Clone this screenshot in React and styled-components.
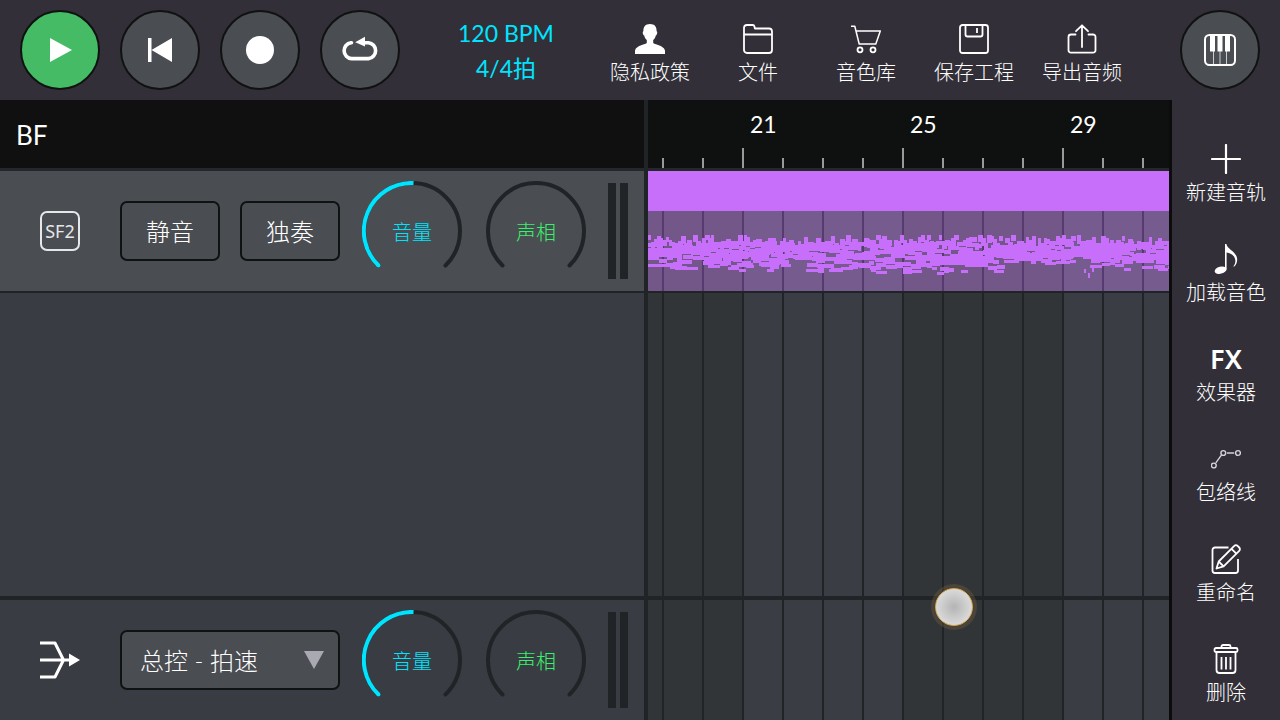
import React, { useState } from 'react'
import styled, { createGlobalStyle } from 'styled-components';

const GlobalStyle = createGlobalStyle`
  * {
    box-sizing: border-box;
  }
  body {
    margin: 0;
    background: #322f38;
    color: white;
    font-family: Lato, "Noto Sans CJK SC", sans-serif;
    font-weight: 300;
  }
  button, select, input {
    font: inherit;
    color: inherit;
    margin: 0;
  }
  svg {
    display: block;
  }
`;

/* ---------- icons ---------- */

const Icon = ({ size = 30, children }) => (
  <svg width={size} height={size} viewBox={`0 0 ${size} ${size}`} fill="none" stroke="white" strokeWidth="1.8" strokeLinejoin="round" aria-hidden="true">
    {children}
  </svg>
)

const PlayIcon = () => (
  <Icon size={40}><path d="M10 8v24l22-12z" fill="white" stroke="none" /></Icon>
)

const RewindIcon = () => (
  <Icon size={40}><path d="M8 8h3.500v24H8zM32 8v24L11.500 20z" fill="white" stroke="none" /></Icon>
)

const RecordIcon = () => (
  <Icon size={40}><circle cx="20" cy="20" r="14" fill="white" stroke="none" /></Icon>
)

const LoopIcon = () => (
  <Icon size={40}>
    <path d="M11.500 12.700h-.5A8 8 0 0 0 11.500 28.600h17A8 8 0 0 0 28.500 12.700h-5" strokeWidth="3.600" strokeLinecap="round" />
    <path d="M15.200 12.300l9.800-5.500v9.600z" fill="white" stroke="none" />
  </Icon>
)

const PianoIcon = () => (
  <Icon size={40}>
    <path d="M13.500 20v15M20 20v15M26.500 20v15" stroke="#c9cbd0" strokeWidth="1" />
    <path d="M10 5h5v16.500h-5zM17.500 5h5v16.500h-5zM25 5h5v16.500h-5z" fill="white" stroke="none" />
    <rect x="5" y="5" width="30" height="30" rx="4.500" strokeWidth="2" />
  </Icon>
)

const UserIcon = () => (
  <Icon>
    <path
      d="M15 0c-4.600 0-6.800 2.800-6.600 7.300-1.200.4-.6 3.700.8 4.200.5 2.200 1.400 3.400 2.600 4.500v2.800c-.6 2.100-10.300 2-11.800 7.700V30h30v-3.500c-1.500-5.700-11.200-5.600-11.800-7.700V16c1.200-1.100 2.100-2.300 2.600-4.500 1.400-.5 2-3.800.8-4.200C21.800 2.800 19.600 0 15 0z"
      fill="white"
      stroke="none"
    />
  </Icon>
)

const FolderIcon = () => (
  <Icon>
    <path d="M1 4a3 3 0 0 1 3-3h5.500a2 2 0 0 1 2 1.600l.4 1.900H26a3 3 0 0 1 3 3V26a3 3 0 0 1-3 3H4a3 3 0 0 1-3-3zM1 10.500h28" />
  </Icon>
)

const CartIcon = () => (
  <Icon>
    <path d="M0 2.200h3.800L8.200 20h16.600L29.300 7H5" strokeWidth="1.500" />
    <circle cx="9" cy="25.800" r="2.500" />
    <circle cx="22" cy="25.800" r="2.500" />
  </Icon>
)

const SaveIcon = () => (
  <Icon>
    <rect x="1" y="1" width="28" height="28" rx="2.500" />
    <path d="M6.500 1v9.500a2 2 0 0 0 2 2h13a2 2 0 0 0 2-2V1M18 4v5" />
  </Icon>
)

const ExportIcon = () => (
  <Icon>
    <path d="M8.500 10.500H4a2.500 2.500 0 0 0-2.500 2.500v13A2.500 2.500 0 0 0 4 28.700h22a2.500 2.500 0 0 0 2.500-2.700V13a2.500 2.500 0 0 0-2.500-2.500h-4.500M15 23V1.500M9 7.200l6-5.900 6 5.900" strokeLinecap="round" />
  </Icon>
)

const PlusIcon = () => (
  <Icon><path d="M1 15h28M15 1v28" strokeWidth="2.200" strokeLinecap="round" /></Icon>
)

const NoteIcon = () => (
  <Icon>
    <g fill="white" stroke="none">
      <ellipse cx="9.600" cy="26.200" rx="6" ry="3.500" transform="rotate(-14 9.600 26.200)" />
      <path d="M14 0h1.400c.5 5 10.800 8 10.800 15.500 0 3-1 5.200-3.200 7.200l-.6-.4c1.600-2 2.200-4 1.900-6.300-.5-4-4-7-8.700-7.600V25.500H14z" />
    </g>
  </Icon>
)

const EnvelopeIcon = () => (
  <Icon>
    <g strokeWidth="1.400" stroke="#d4d3d6">
      <circle cx="2.800" cy="21.500" r="2.400" />
      <circle cx="12.300" cy="9" r="2.400" />
      <circle cx="27" cy="9" r="2.400" />
      <path d="M4.800 18.800l5.600-7.600M16 9h7.200" />
    </g>
  </Icon>
)

const RenameIcon = () => (
  <Icon>
    <path d="M17.500 3.500H4A2.500 2.500 0 0 0 1.500 6v20.500A2.500 2.500 0 0 0 4 29h20.500a2.500 2.500 0 0 0 2.500-2.500V15" />
    <path d="M5.500 24.500l2.200-7L23.300 1.900a2.300 2.300 0 0 1 3.300 0l1.600 1.600a2.300 2.300 0 0 1 0 3.300L12.600 22.300zM20.500 4.800l4.900 4.900M7.700 17.500l4.900 4.800" />
  </Icon>
)

const TrashIcon = () => (
  <Icon>
    <rect x="3.500" y="4" width="23" height="4" rx="1.500" />
    <path d="M10.500 4V2.500A1.500 1.500 0 0 1 12 1h6a1.500 1.500 0 0 1 1.500 1.500V4M5.500 8v18a3 3 0 0 0 3 3h13a3 3 0 0 0 3-3V8M10.500 13v12.500M15 13v12.500M19.500 13v12.500" />
  </Icon>
)

const MergeIcon = () => (
  <Icon size={40}>
    <path d="M0 3h15l8.500 17L15 37H0M0 20h30" strokeWidth="3" />
    <path d="M29 13.500L40 20l-11 6.500z" fill="white" stroke="none" />
  </Icon>
)

/* ---------- page ---------- */

const App = () => {
  return (
    <Page>
      <GlobalStyle />
      <Header>
        <Transport>
          <RoundButton $active aria-label="播放"><PlayIcon /></RoundButton>
          <RoundButton aria-label="回到开头"><RewindIcon /></RoundButton>
          <RoundButton aria-label="录音"><RecordIcon /></RoundButton>
          <RoundButton aria-label="循环"><LoopIcon /></RoundButton>
        </Transport>
        <Tempo>
          <span>120 BPM</span>
          <span>4/4拍</span>
        </Tempo>
        <Tools>
          {tools.map((tool) => <ToolItem key={tool.label} {...tool} />)}
        </Tools>
        <RoundButton aria-label="键盘"><PianoIcon /></RoundButton>
      </Header>
      <Main>
        <TrackPanel>
          <ProjectName>BF</ProjectName>
          <TrackRow>
            <Badge>SF2</Badge>
            <Controls>
              <TrackButton>静音</TrackButton>
              <TrackButton>独奏</TrackButton>
            </Controls>
            <Mixer />
          </TrackRow>
          <Filler />
          <TrackRow $master>
            <MergeIcon />
            <Controls>
              <SelectBox>
                <Select aria-label="总控" defaultValue="tempo">
                  <option value="tempo">总控 - 拍速</option>
                </Select>
                <Arrow width="20" height="18" viewBox="0 0 20 18" aria-hidden="true">
                  <path d="M0 0h20L10 18z" fill="#a9a9b2" />
                </Arrow>
              </SelectBox>
            </Controls>
            <Mixer />
          </TrackRow>
        </TrackPanel>
        <Arranger>
          <Ruler>
            {[21, 25, 29].map((bar) => <Measure key={bar}>{bar}</Measure>)}
          </Ruler>
          <Lane>
            <Clip>
              <ClipBody>
                <Notes />
              </ClipBody>
            </Clip>
          </Lane>
          <Filler />
          <MasterLane />
          <Pointer />
        </Arranger>
        <Sidebar>
          {actions.map((action) => <ToolItem key={action.label} {...action} />)}
        </Sidebar>
      </Main>
    </Page>
  )
}

export default App

const ToolItem = ({ icon, label }) => (
  <ToolButton>
    {icon}
    <span>{label}</span>
  </ToolButton>
)

/* ---------- mixer controls ---------- */

const Knob = ({ label, color, filled }) => {
  const [value, setValue] = useState(50)

  return (
    <KnobBox $color={color}>
      <svg width="100" height="100" viewBox="0 0 100 100" fill="none" strokeWidth="4" aria-hidden="true">
        <path d="M16.500 84.500A48 48 0 1 1 83.500 84.500" stroke="#212427" strokeLinecap="round" />
        {filled && (
          <>
            <path d="M16.500 84.500A48 48 0 0 1 51.500 2" stroke="#00e5ff" />
            <circle cx="16.500" cy="84.500" r="2" fill="#00e5ff" />
          </>
        )}
      </svg>
      <KnobLabel>{label}</KnobLabel>
      <KnobInput type="range" value={value} onChange={(e) => setValue(Number(e.target.value))} />
    </KnobBox>
  )
}

const Mixer = () => (
  <>
    <Knobs>
      <Knob label="音量" color="#00e5ff" filled />
      <Knob label="声相" color="#37f26a" />
    </Knobs>
    <Meters>
      <Meter />
      <Meter />
    </Meters>
  </>
)

/* ---------- clip notes ---------- */

// lowest note of the clip at a given x
const lowEdge = [
  [0, 31], [24, 34], [36, 31], [56, 29], [80, 33], [97, 29], [110, 34], [130, 31], [150, 33],
  [162, 36], [185, 34], [205, 31], [217, 36], [232, 34], [250, 36], [275, 33], [288, 36],
  [312, 34], [350, 25], [380, 27], [442, 29], [468, 32], [485, 30], [500, 34], [514, 31],
]

const buildNotes = () => {
  const notes = []
  let seed = 11
  const random = () => {
    seed = (seed * 16807) % 2147483647
    return seed / 2147483647
  }
  const lowAt = (x) => lowEdge.filter(([start]) => start <= x % 521).pop()[1]

  // short melody notes along the top
  for (let x = 0; x < 1600; x += 3) {
    const y = Math.floor(random() * 9)
    if (random() < 0.82) {
      notes.push({ x, y, width: 3 + Math.floor(random() * 3), height: 5 + Math.floor(random() * 5) })
    }
  }
  // the full middle
  for (let row = 0; row < 5; row++) {
    let x = 0
    while (x < 1600) {
      const width = 4 + Math.floor(random() * 8)
      const drift = Math.round(Math.sin(x / 17 + row) * 2)
      if (random() < 0.8) {
        notes.push({ x, y: 8 + row * 3 + drift, width, height: 4 })
      }
      x += width
    }
  }
  // bass lines, stepping with the low edge
  const lines = [[0, 0.75], [4, 0.72], [8, 0.8], [11, 0.75], [14, 0.6]]
  lines.forEach(([up, amount]) => {
    let x = 0
    while (x < 1600) {
      const width = 5 + Math.floor(random() * 8)
      const step = Math.floor(random() * 4) - 2
      if (random() < amount) {
        notes.push({ x, y: lowAt(x) - up + step, width, height: up ? 4 : 3 })
      }
      x += width
    }
  })
  return notes
}

const clipNotes = buildNotes()

const Notes = () => (
  <svg width="100%" height="46" fill="#c76ffa" stroke="none" shapeRendering="crispEdges" aria-hidden="true">
    {clipNotes.map((note, i) => <rect key={i} {...note} />)}
    <path d="M436 34h2v4h-2zM440 38h2v5h-2zM444 33h2v4h-2z" />
  </svg>
)

/* ---------- styles ---------- */

const Page = styled.div`
  min-height: 100vh;
  display: flex;
  flex-direction: column;
`;
const Header = styled.header`
  display: flex;
  align-items: center;
  height: 100px;
  padding: 0 20px;
`;
const Transport = styled.div`
  display: flex;
  gap: 20px;
`;
const RoundButton = styled.button`
  display: grid;
  place-items: center;
  width: 80px;
  height: 80px;
  padding: 0;
  border: 2px solid #101211;
  border-radius: 50%;
  background: ${(props) => props.$active ? "#44bb64" : "#4a4d52"};
`;
const Tempo = styled.button`
  flex: 1;
  display: flex;
  flex-direction: column;
  align-items: center;
  padding: 2px 0 0 16px;
  border: none;
  background: none;
  color: #00e5ff;
  font-size: 23px;
  font-weight: 400;
  line-height: 35px;
`;
const Tools = styled.nav`
  display: flex;
  margin-right: 44px;
`;
const ToolButton = styled.button`
  display: flex;
  flex-direction: column;
  align-items: center;
  gap: 6px;
  width: 108px;
  height: 100px;
  padding: 24px 0 0;
  border: none;
  background: none;
  font-size: 20px;
  line-height: 24px;
  white-space: nowrap;
`;
const FxIcon = styled.span`
  font-family: "Noto Sans", sans-serif;
  font-size: 27px;
  font-weight: 600;
  line-height: 30px;
`;

const tools = [
  { label: '隐私政策', icon: <UserIcon /> },
  { label: '文件', icon: <FolderIcon /> },
  { label: '音色库', icon: <CartIcon /> },
  { label: '保存工程', icon: <SaveIcon /> },
  { label: '导出音频', icon: <ExportIcon /> },
]
const actions = [
  { label: '新建音轨', icon: <PlusIcon /> },
  { label: '加载音色', icon: <NoteIcon /> },
  { label: '效果器', icon: <FxIcon>FX</FxIcon> },
  { label: '包络线', icon: <EnvelopeIcon /> },
  { label: '重命名', icon: <RenameIcon /> },
  { label: '删除', icon: <TrashIcon /> },
]

const Main = styled.main`
  flex: 1;
  display: flex;
`;
const TrackPanel = styled.section`
  display: flex;
  flex-direction: column;
  border-right: 4px solid #212427;
  background: #3a3c43;
`;
const ProjectName = styled.div`
  height: 71px;
  padding: 0 16px;
  border-bottom: 3px solid #24282b;
  background: #101010;
  font-size: 26px;
  font-weight: 400;
  line-height: 70px;
`;
const TrackRow = styled.div`
  display: flex;
  align-items: center;
  height: ${(props) => props.$master ? "124px" : "122px"};
  padding: 0 16px 0 40px;
  border: 0 solid #212427;
  border-width: ${(props) => props.$master ? "4px 0 0" : "0 0 2px"};
  background: ${(props) => props.$master ? "#3a3c43" : "#4a4d52"};
`;
const Filler = styled.div`
  flex: 1;
`;
const Badge = styled.span`
  display: flex;
  justify-content: center;
  width: 40px;
  height: 40px;
  border: 2px solid #e6e7e8;
  border-radius: 7px;
  color: #e6e7e8;
  font-family: "Noto Sans", sans-serif;
  font-size: 18px;
  font-weight: 400;
  line-height: 36px;
`;
const Controls = styled.div`
  display: flex;
  gap: 20px;
  margin: 0 22px 0 40px;
`;
const TrackButton = styled.button`
  width: 100px;
  height: 60px;
  padding: 0 0 2px;
  border: 2px solid #101211;
  border-radius: 7px;
  background: none;
  font-size: 24px;
`;
const SelectBox = styled.div`
  display: grid;
  align-items: center;
  width: 220px;
`;
const Select = styled.select`
  grid-area: 1 / 1;
  height: 60px;
  padding: 0 40px 0 18px;
  appearance: none;
  border: 2px solid #101211;
  border-radius: 7px;
  background: #4a4d52;
  font-size: 24px;
`;
const Arrow = styled.svg`
  grid-area: 1 / 1;
  justify-self: end;
  margin-right: 16px;
  pointer-events: none;
`;
const Knobs = styled.div`
  display: flex;
  gap: 24px;
`;
const KnobBox = styled.label`
  display: grid;
  place-items: center;
  width: 100px;
  height: 100px;
  color: ${(props) => props.$color};

  > * {
    grid-area: 1 / 1;
  }
`;
const KnobLabel = styled.span`
  padding-top: 2px;
  font-size: 20px;
  line-height: 24px;
`;
const KnobInput = styled.input`
  width: 100%;
  height: 100%;
  opacity: 0;
  cursor: pointer;
`;
const Meters = styled.div`
  display: flex;
  gap: 4px;
  margin-left: 22px;
`;
const Meter = styled.div`
  width: 8px;
  height: 96px;
  background: #212427;
`;

const Arranger = styled.section`
  position: relative;
  flex: 1;
  min-width: 0;
  overflow: hidden;
  display: flex;
  flex-direction: column;
  background:
    linear-gradient(90deg, #212427 2px, transparent 2px) 14px 0 / 40px 100%,
    linear-gradient(90deg, #3a3d43 160px, #323538 160px) -226px 0 / 320px 100%;
`;
const Ruler = styled.div`
  display: flex;
  height: 71px;
  padding-left: 94px;
  border-bottom: 3px solid #24282b;
  background:
    linear-gradient(90deg, #999 2px, transparent 2px) 94px 100% / 160px 20px repeat-x,
    linear-gradient(90deg, #999 2px, transparent 2px) 14px 100% / 40px 10px repeat-x,
    #0f1110;
`;
const Measure = styled.span`
  flex: none;
  width: 160px;
  padding-left: 8px;
  font-size: 23px;
  font-weight: 400;
  line-height: 48px;
`;
const Lane = styled.div`
  height: 122px;
  border-bottom: 2px solid #212427;
`;
const Clip = styled.div`
  height: 120px;
  border-top: 40px solid #c76ffa;
`;
const ClipBody = styled.div`
  height: 80px;
  padding-top: 24px;
  background:
    linear-gradient(90deg, rgba(60, 30, 90, 0.4) 2px, transparent 2px) 14px 0 / 40px 100%,
    rgba(188, 126, 228, 0.47);
`;
const MasterLane = styled.div`
  height: 124px;
  border-top: 4px solid #212427;
`;
const Pointer = styled.div`
  position: absolute;
  left: 287px;
  top: 488px;
  width: 38px;
  height: 38px;
  border: 1px solid #d9a850;
  border-radius: 50%;
  background: radial-gradient(#b4b4b4, #dadada 70%);
  box-shadow: 0 0 0 4px rgba(110, 92, 60, 0.4);
`;
const Sidebar = styled.aside`
  padding-top: 20px;
  border-left: 3px solid #0c0c0d;
`;
